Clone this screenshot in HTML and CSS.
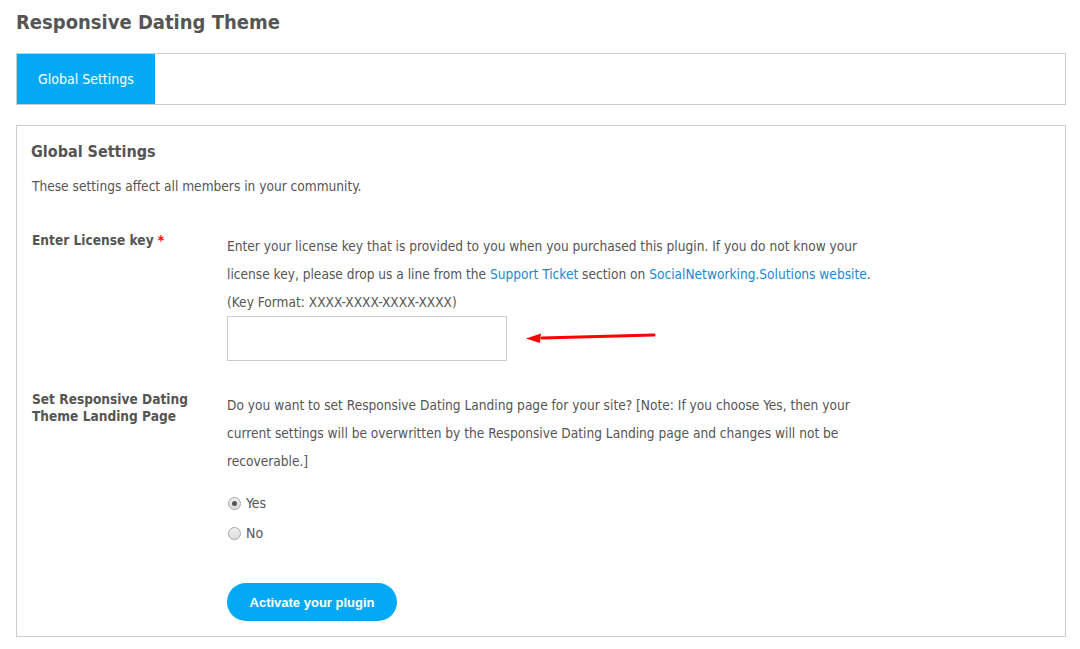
FILE: index.html
```html
<!DOCTYPE html>
<html lang="en">
<head>
    <meta charset="UTF-8">
    <title>Responsive Dating Theme</title>
    <link rel="stylesheet" href="styles.css">
</head>
<body>
    <div class="wrap">
        <h1>Responsive Dating Theme</h1>

        <div class="tabs">
            <a class="tab active" href="#">Global Settings</a>
        </div>

        <form class="settings-box">
            <h2>Global Settings</h2>
            <p class="intro">These settings affect all members in your community.</p>

            <div class="form-row">
                <label class="row-label" for="license-key">Enter License key <span class="req">*</span></label>
                <div class="row-field">
                    <p class="hint">Enter your license key that is provided to you when you purchased this plugin. If you do not know your license key, please drop us a line from the <a href="#">Support Ticket</a> section on <a href="#">SocialNetworking.Solutions website</a>.<br>(Key Format: XXXX-XXXX-XXXX-XXXX)</p>
                    <div class="key-line">
                        <input type="text" id="license-key" class="key-input">
                        <!-- pointer arrow from the screenshot -->
                        <svg class="arrow" width="132" height="14" viewBox="0 0 132 14">
                            <path d="M128 4 L16 7" stroke="#f00" stroke-width="3" stroke-linecap="round" fill="none"/>
                            <path d="M0 7.5 L15 2.5 L14 12 Z" fill="#f00"/>
                        </svg>
                    </div>
                </div>
            </div>

            <div class="form-row">
                <label class="row-label">Set Responsive Dating Theme Landing Page</label>
                <div class="row-field">
                    <p class="hint">Do you want to set Responsive Dating Landing page for your site? [Note: If you choose Yes, then your current settings will be overwritten by the Responsive Dating Landing page and changes will not be recoverable.]</p>
                    <div class="radios">
                        <label class="radio"><input type="radio" name="landing" checked> Yes</label>
                        <label class="radio"><input type="radio" name="landing"> No</label>
                    </div>
                    <button type="button" class="btn-activate">Activate your plugin</button>
                </div>
            </div>
        </form>
    </div>
</body>
</html>
```

FILE: styles.css
```css
/* Reset */
* {
    margin: 0;
    padding: 0;
    box-sizing: border-box;
}

body {
    font-family: "DejaVu Sans", Tahoma, sans-serif;
    font-stretch: condensed;
    font-size: 13.6px;
    color: #555;
    background: #fff;
}

.wrap {
    padding: 8px 14px 0 16px;
}

h1 {
    font-size: 20px;
    font-weight: bold;
    color: #555;
    line-height: 28px;
    margin-bottom: 17px;
}

/* Tabs */
.tabs {
    display: flex;
    border: 1px solid #ccc;
    height: 52px;
}

.tab {
    display: flex;
    align-items: center;
    padding: 0 21px;
    background: #03a9f4;
    color: #fff;
    font-size: 14px;
    text-decoration: none;
}

/* Settings box */
.settings-box {
    margin-top: 20px;
    border: 1px solid #ccc;
    padding: 14px 15px 15px 14px;
}

h2 {
    font-size: 16px;
    font-weight: bold;
    color: #555;
    line-height: 24px;
}

.intro {
    margin-top: 12px;
    line-height: 20px;
    padding-left: 1px;
}

.form-row {
    display: flex;
    margin-top: 34px;
}

.form-row + .form-row {
    margin-top: 28px;
}

.row-label {
    width: 196px;
    flex-shrink: 0;
    font-weight: bold;
    line-height: 17px;
    padding-left: 1px;
    padding-top: 2px;
}

.req {
    color: #f00;
}

.row-field {
    max-width: 660px;
}

.hint {
    line-height: 28px;
    padding-top: 2px;
}

.hint a {
    color: #1b87d0;
    text-decoration: none;
}

.key-line {
    display: flex;
    align-items: center;
}

.key-input {
    width: 280px;
    height: 45px;
    border: 1px solid #ccc;
    outline: none;
}

.arrow {
    margin-left: 19px;
    margin-top: -2px;
}

.radios {
    margin-top: 13px;
}

.radio {
    display: flex;
    align-items: center;
    height: 30px;
    font-size: 14px;
}

.radio input {
    appearance: none;
    -webkit-appearance: none;
    margin: 0 5px 0 1px;
    width: 13px;
    height: 13px;
    border: 1px solid #a6a6a6;
    border-radius: 50%;
    background: linear-gradient(#f0f0f0, #dcdcdc);
    display: flex;
    align-items: center;
    justify-content: center;
}

.radio input:checked::after {
    content: "";
    width: 5px;
    height: 5px;
    border-radius: 50%;
    background: #555;
}

.btn-activate {
    margin-top: 35px;
    width: 170px;
    height: 38px;
    border: none;
    border-radius: 19px;
    background: #03a9f4;
    color: #fff;
    font-family: "Liberation Sans", Arial, sans-serif;
    font-size: 13px;
    font-weight: bold;
    cursor: pointer;
}
```
